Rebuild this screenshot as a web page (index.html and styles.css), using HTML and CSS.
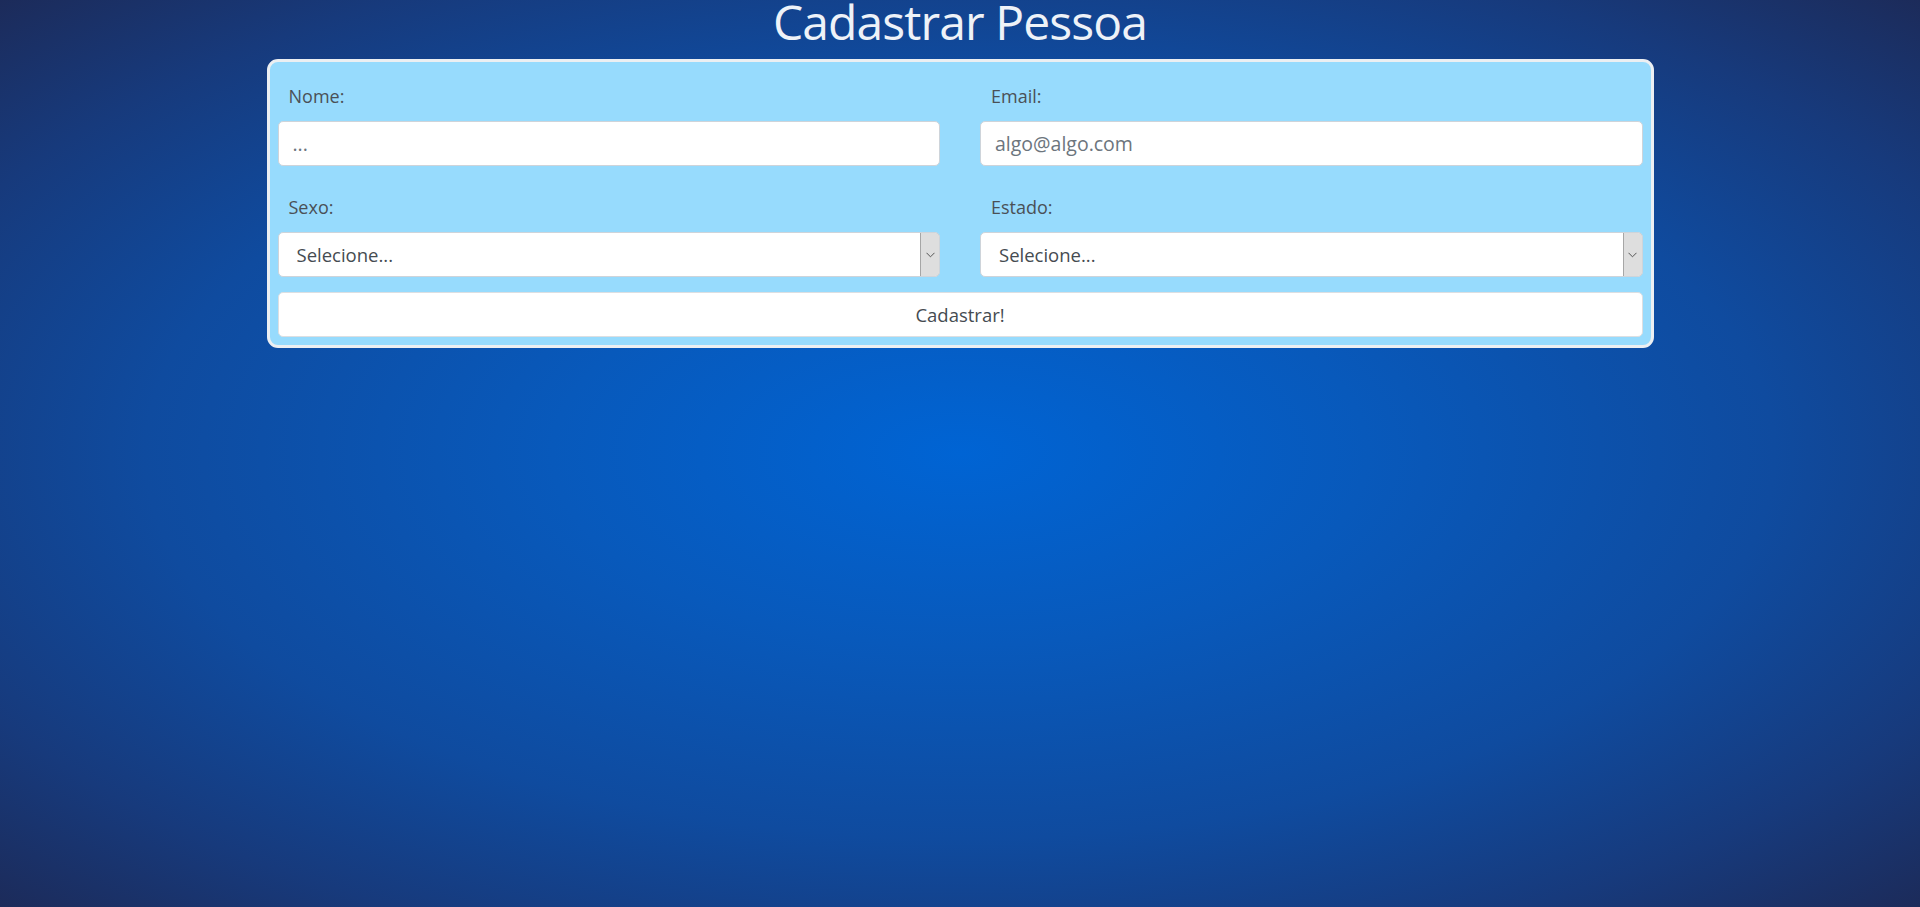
FILE: index.html
```html
<!DOCTYPE html>
<html lang="pt-BR">
<head>
<meta charset="utf-8">
<title>Cadastrar Pessoa</title>
<link rel="stylesheet" href="styles.css">
</head>
<body>
<main class="page">
  <h1 class="title">Cadastrar Pessoa</h1>
  <form class="card">
    <div class="grid">
      <div class="field">
        <label class="label" for="nome">Nome:</label>
        <input class="control" id="nome" type="text" placeholder="...">
      </div>
      <div class="field">
        <label class="label" for="email">Email:</label>
        <input class="control" id="email" type="email" placeholder="algo@algo.com">
      </div>
      <div class="field">
        <label class="label" for="sexo">Sexo:</label>
        <div class="select-box">
          <select class="select" id="sexo"><option>Selecione...</option></select>
          <span class="arrow"><svg width="9" height="6" viewBox="0 0 9 6"><polyline points="0.5,0.8 4.5,4.8 8.5,0.8" fill="none" stroke="#555" stroke-width="1"/></svg></span>
        </div>
      </div>
      <div class="field">
        <label class="label" for="estado">Estado:</label>
        <div class="select-box">
          <select class="select" id="estado"><option>Selecione...</option></select>
          <span class="arrow"><svg width="9" height="6" viewBox="0 0 9 6"><polyline points="0.5,0.8 4.5,4.8 8.5,0.8" fill="none" stroke="#555" stroke-width="1"/></svg></span>
        </div>
      </div>
    </div>
    <button class="submit" type="button">Cadastrar!</button>
  </form>
</main>
</body>
</html>
```
FILE: styles.css
```css
* { box-sizing: border-box; }

html, body {
  margin: 0;
  height: 100%;
}

body {
  font-family: "Open Sans", "Noto Sans", sans-serif;
  background: radial-gradient(ellipse farthest-corner at 50% 50%, #0064d4 0%, #0859bb 30%, #0f4b9f 60%, #173a7c 82%, #1c2b5a 100%);
  background-attachment: fixed;
  min-height: 907px;
}

.page {
  width: 1387px;
  margin: 0 auto;
}

.title {
  margin: 0;
  height: 59px;
  font-size: 48px;
  font-weight: 400;
  line-height: 44px;
  text-align: center;
  color: #eef2f8;
  letter-spacing: -0.9px;
}

.card {
  background: #97dbfd;
  border: 3px solid #eceff2;
  border-radius: 11px;
  padding: 20px 8px 8px;
}

.grid {
  display: grid;
  grid-template-columns: 1fr 1fr;
  column-gap: 40px;
  row-gap: 27px;
}

.field {
  display: flex;
  flex-direction: column;
}

.label {
  display: block;
  height: 29px;
  line-height: 29px;
  margin-bottom: 10px;
  padding-left: 11px;
  font-size: 18px;
  color: #4a5056;
}

.control {
  height: 45px;
  width: 100%;
  border: 1px solid #ced4da;
  border-radius: 5px;
  background: #fff;
  padding: 0 14px;
  font-family: inherit;
  font-size: 19.5px;
  color: #495057;
}

.control::placeholder {
  color: #6c757d;
  opacity: 1;
}

.select-box {
  display: flex;
  height: 45px;
  border: 1px solid #ced4da;
  border-radius: 5px;
  background: #fff;
  overflow: hidden;
}

.select {
  flex: 1;
  appearance: none;
  -webkit-appearance: none;
  border: 0;
  background: transparent;
  padding: 0 0 0 18px;
  font-family: inherit;
  font-size: 18.5px;
  color: #454b51;
}

.arrow {
  width: 20px;
  display: flex;
  align-items: center;
  justify-content: center;
  background: #dedede;
  border: 1px solid #a6a6a6;
  border-radius: 0 4px 4px 0;
  margin: -1px -1px -1px 0;
}

.submit {
  display: block;
  width: 100%;
  height: 45px;
  margin-top: 15px;
  border: 1px solid #dcdfe2;
  border-radius: 5px;
  background: #fff;
  font-family: inherit;
  font-size: 18.5px;
  color: #454b51;
}
```
